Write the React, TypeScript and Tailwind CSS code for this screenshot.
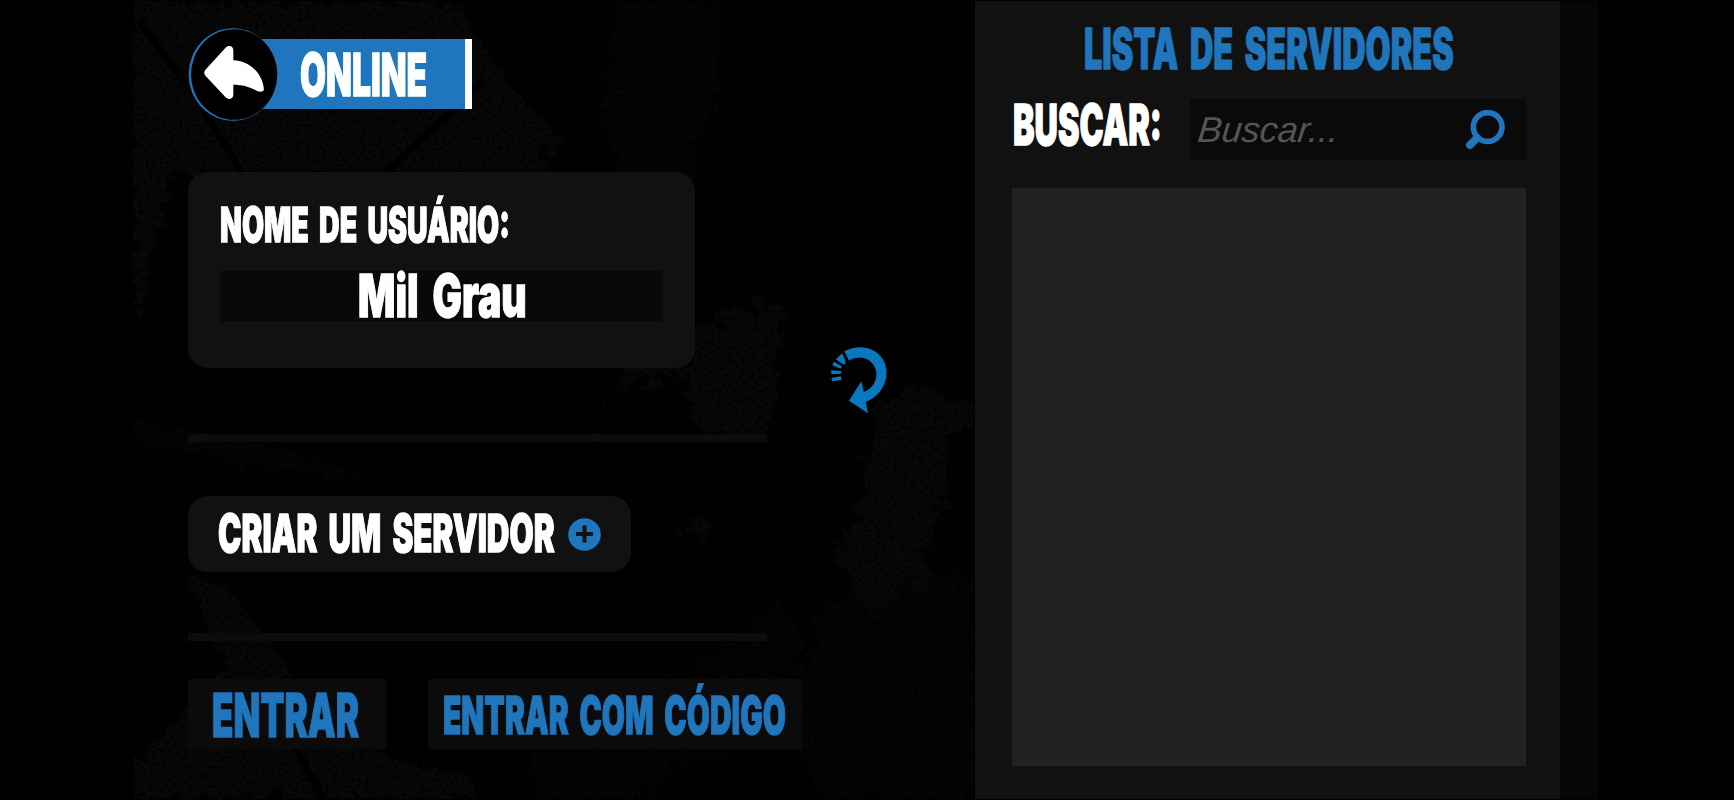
import { useLayoutEffect, useRef, useState } from 'react'
import clsx from 'clsx'

// Squeezes heavy text sideways until it fills its box, for the poster look
function Poster({ text, className }: { text: string; className?: string }) {
    const box = useRef<HTMLDivElement>(null)
    const label = useRef<HTMLSpanElement>(null)
    const [scale, setScale] = useState(1)

    useLayoutEffect(() => {
        if (box.current && label.current) {
            setScale(box.current.clientWidth / label.current.offsetWidth)
        }
    }, [text])

    return (
        <div
            ref={box}
            className={clsx(
                "shrink-0 font-['Inter','Liberation_Sans',sans-serif] leading-none font-black [word-spacing:0.16em] whitespace-nowrap [-webkit-text-stroke:1.3px_currentColor]",
                className
            )}
        >
            <span ref={label} className="inline-block origin-left" style={{ transform: `scaleX(${scale})` }}>
                {text}
            </span>
        </div>
    )
}

function BackIcon() {
    return (
        <svg viewBox="0 0 270 280" className="h-[93px] w-[90px]">
            <ellipse cx="135" cy="140" rx="133.5" ry="139.5" fill="#1f76bc" />
            <ellipse cx="138.5" cy="140" rx="130" ry="136.5" fill="#000" />
            <path
                d="M52 126L112 60C121 50 136 54 136 67V97C185 99 225 137 228 184C229 193 217 194 208 190C184 177 163 171 136 171V201C136 214 121 218 112 208L52 144Q45 135 52 126Z"
                fill="#fff"
            />
        </svg>
    )
}

function RefreshIcon() {
    return (
        <svg viewBox="0 0 240 300" className="h-[100px] w-[80px]" fill="#0878bf">
            <path d="M73 64C113 42 161 49 186 84C217 130 193 194 137 216L144 250L87 212L124 154L131 186C163 174 180 137 162 107C146 80 113 75 87 92Z" />
            <path d="M67 70L78 98L71 104L47 88Z" />
            <path d="M42 95L65 109L62 116L37 106Z" />
            <path d="M34 121L63 123V131L34 133Z" />
            <path d="M34 144L63 139L65 149L37 154Z" />
        </svg>
    )
}

function SearchIcon() {
    return (
        <svg viewBox="0 0 120 120" className="h-[40px] w-[40px]" fill="none" stroke="#1f76bc">
            <circle cx="68" cy="51" r="43" strokeWidth="17" />
            <path d="M36 84L15 105" strokeWidth="24" strokeLinecap="round" />
        </svg>
    )
}

function PlusIcon() {
    return (
        <svg viewBox="0 0 33 33" className="h-[33px] w-[33px]">
            <circle cx="16.5" cy="16.5" r="16.3" fill="#1f76bc" />
            <path d="M8 16H25M16.5 7.5V24.5" stroke="#111" strokeWidth="4" />
        </svg>
    )
}

// Faint scratched paint behind the menu
function Grunge() {
    return (
        <svg viewBox="0 0 1468 800" className="absolute inset-0 h-full w-full">
            <defs>
                <filter id="rough" x="0" y="0" width="100%" height="100%" colorInterpolationFilters="sRGB">
                    <feTurbulence type="fractalNoise" baseFrequency="0.06" numOctaves="4" seed="8" result="noise" />
                    <feDisplacementMap in="SourceGraphic" in2="noise" scale="32" result="torn" />
                    <feTurbulence type="fractalNoise" baseFrequency="0.3" numOctaves="2" seed="3" />
                    <feColorMatrix values="0 0 0 0 0  0 0 0 0 0  0 0 0 0 0  0 0 0 8 -2.6" result="specks" />
                    <feComposite in="torn" in2="specks" operator="in" />
                </filter>
            </defs>
            <path d="M1428 0H1468V800H1428Z" fill="#060606" />
            <g filter="url(#rough)" fill="#070707">
                <path d="M0 0H325L370 75L420 130L410 190L330 180L130 175L40 175L0 330Z" />
                <path d="M480 0H590L585 90L550 190L500 200L470 130Z" opacity=".5" />
                <path d="M570 325L640 298L655 310L645 360L640 430L610 440L590 435L555 420L560 375L500 385L480 400L510 330Z" />
                <path d="M745 400L775 395L790 382L815 400L843 402V425L815 440L815 490L795 560L800 600L775 590L740 620L715 570L700 565L735 480Z" />
                <path d="M50 570L95 590L150 660L190 740L340 780V800H0V760L90 670Z" />
                <path d="M690 605L740 590L795 570L843 580V800H690L660 740L680 640Z" opacity=".6" />
                <path d="M400 740L590 650L650 600L670 640V740L560 760L500 800H400Z" opacity=".5" />
                <path d="M0 420L150 450L240 480L130 470L0 440Z" opacity=".6" />
                <path d="M560 520L575 515L570 535L540 540Z" />
            </g>
            <path d="M5 20L65 100L110 175M350 80L250 175M160 745L190 800" fill="none" stroke="#000" strokeWidth="7" />
            <path d="M475 370L470 420L448 480" fill="none" stroke="#080808" strokeWidth="1" />
        </svg>
    )
}

function Divider() {
    return <div className="h-[8px] w-[579px] bg-[#0c0c0c]" />
}

function Menu() {
    return (
        <section className="flex w-[614px] flex-col items-start pt-[26px]">
            <header className="flex h-[94px] items-center">
                <button className="z-10">
                    <BackIcon />
                </button>
                <div className="-ml-[38px] flex h-[70px] w-[232px] items-center border-r-[7px] border-white bg-[#1f76bc] pl-[60px]">
                    <Poster text="ONLINE" className="w-[127px] text-[59px] text-white" />
                </div>
            </header>

            <div className="mt-[51px] flex h-[196px] w-[507px] flex-col rounded-[20px] bg-[#111] px-8 pt-[29px]">
                <Poster text="NOME DE USUÁRIO:" className="w-[290px] text-[48px] text-white" />
                <div className="mt-[22px] flex h-[51px] w-[443px] items-center justify-center bg-[#090909] pb-[2px] pl-[2px]">
                    <Poster text="Mil Grau" className="w-[169px] text-[59px] text-white" />
                </div>
            </div>

            <div className="mt-[66px]">
                <Divider />
            </div>

            <button className="mt-[54px] flex h-[76px] w-[443px] items-center gap-[13px] rounded-[20px] bg-[#111] pl-[30px]">
                <Poster text="CRIAR UM SERVIDOR" className="w-[337px] text-left text-[52px] text-white" />
                <PlusIcon />
            </button>

            <div className="mt-[61px]">
                <Divider />
            </div>

            <div className="mt-[38px] flex w-full justify-between">
                <button className="flex h-[70px] w-[198px] items-center bg-[#0b0b0b] pt-[2px] pl-[24px]">
                    <Poster text="ENTRAR" className="w-[147px] text-left text-[61px] text-[#1f76bc]" />
                </button>
                <button className="flex h-[70px] w-[374px] items-center bg-[#0b0b0b] pt-1 pl-[15px]">
                    <Poster text="ENTRAR COM CÓDIGO" className="w-[343px] text-left text-[52px] text-[#1f76bc]" />
                </button>
            </div>
        </section>
    )
}

function ServerList() {
    return (
        <aside className="flex w-[585px] flex-col bg-[#111] px-[37px] pt-[20px]">
            <Poster text="LISTA DE SERVIDORES" className="ml-[72px] w-[370px] text-[56px] text-[#1f76bc]" />
            <div className="mt-[22px] flex h-[61px] justify-between">
                <Poster text="BUSCAR:" className="-mt-[2px] ml-[1px] w-[149px] text-[56px] text-white" />
                <label className="-mr-[3px] flex w-[336px] items-center justify-between bg-[#0a0a0a] pr-[21px] pl-2">
                    <input
                        placeholder="Buscar..."
                        className="w-[200px] -skew-x-6 bg-transparent font-['Liberation_Sans',sans-serif] text-[36px] text-white italic outline-none placeholder:text-[#555]"
                    />
                    <SearchIcon />
                </label>
            </div>
            <div className="mt-[28px] h-[578px] w-[514px] bg-[#222]" />
        </aside>
    )
}

export default function App() {
    return (
        <main className="h-[800px] w-[1734px] overflow-hidden bg-black">
            <div className="relative ml-[132px] flex h-[800px] w-[1468px] border-y border-black bg-[#010101]">
                <Grunge />
                <div className="relative flex pl-14">
                    <Menu />
                    <button className="mt-[329px] ml-[18px] h-[100px] w-[80px]">
                        <RefreshIcon />
                    </button>
                </div>
                <div className="relative ml-[75px] flex">
                    <ServerList />
                </div>
            </div>
        </main>
    )
}
